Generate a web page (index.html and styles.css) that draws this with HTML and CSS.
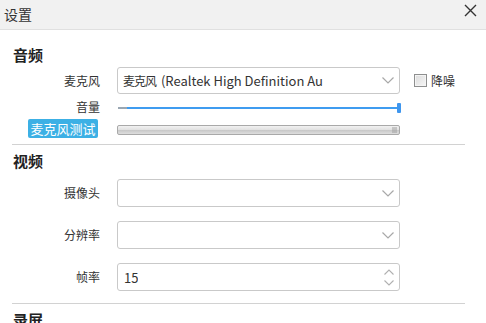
FILE: index.html
```html
<!DOCTYPE html>
<html lang="zh-CN">
<head>
<meta charset="utf-8">
<title>设置</title>
<link rel="stylesheet" href="styles.css">
</head>
<body>
<div class="window">
  <header class="titlebar">
    <span class="title">设置</span>
    <button class="close" aria-label="关闭">
      <svg width="13" height="13" viewBox="0 0 13 13"><path d="M1 1 L12 12 M12 1 L1 12" stroke="#333" stroke-width="1.4" fill="none"/></svg>
    </button>
  </header>
  <main class="content">
    <section class="section audio">
      <h2 class="heading">音频</h2>
      <div class="row row-mic">
        <label class="label">麦克风</label>
        <div class="select">
          <span class="value"><span class="cjk-narrow">麦克风</span> (Realtek High Definition Au</span>
          <svg class="chev" width="12" height="7" viewBox="0 0 12 7"><path d="M0.5 0.5 L6 6 L11.5 0.5" stroke="#a8a8a8" stroke-width="1.2" fill="none"/></svg>
        </div>
        <label class="check"><span class="box"></span>降噪</label>
      </div>
      <div class="row row-vol">
        <label class="label">音量</label>
        <div class="slider">
          <span class="track-start"></span>
          <span class="track-fill"></span>
          <span class="thumb"></span>
        </div>
      </div>
      <div class="row row-test">
        <div class="label"><button class="test-btn">麦克风测试</button></div>
        <div class="progress"><span class="grip"></span></div>
      </div>
    </section>
    <section class="section video">
      <h2 class="heading">视频</h2>
      <div class="row row-field">
        <label class="label">摄像头</label>
        <div class="select">
          <span class="value"></span>
          <svg class="chev" width="12" height="7" viewBox="0 0 12 7"><path d="M0.5 0.5 L6 6 L11.5 0.5" stroke="#a8a8a8" stroke-width="1.2" fill="none"/></svg>
        </div>
      </div>
      <div class="row row-field">
        <label class="label">分辨率</label>
        <div class="select">
          <span class="value"></span>
          <svg class="chev" width="12" height="7" viewBox="0 0 12 7"><path d="M0.5 0.5 L6 6 L11.5 0.5" stroke="#a8a8a8" stroke-width="1.2" fill="none"/></svg>
        </div>
      </div>
      <div class="row row-field">
        <label class="label">帧率</label>
        <div class="select spin">
          <span class="value">15</span>
          <span class="spin-arrows">
            <svg width="10" height="6" viewBox="0 0 10 6"><path d="M0.5 5.5 L5 1 L9.5 5.5" stroke="#b0b0b0" stroke-width="1.1" fill="none"/></svg>
            <svg width="10" height="6" viewBox="0 0 10 6"><path d="M0.5 0.5 L5 5 L9.5 0.5" stroke="#b0b0b0" stroke-width="1.1" fill="none"/></svg>
          </span>
        </div>
      </div>
    </section>
    <section class="section record">
      <h2 class="heading">录屏</h2>
    </section>
  </main>
</div>
</body>
</html>
```
FILE: styles.css
```css
* { box-sizing: border-box; }
html, body { margin: 0; padding: 0; background: #fff; }
body {
  font-family: "Noto Sans CJK SC", "Noto Sans", sans-serif;
  font-size: 13px;
  color: #333;
  overflow: hidden;
  height: 323px;
}
.titlebar {
  height: 30px;
  background: #f1f1f1;
  border-bottom: 1px solid #e0e0e0;
  display: flex;
  align-items: center;
  justify-content: space-between;
  padding: 0 9px 2px 4px;
}
.title { font-size: 14px; color: #333; line-height: 20px; }
.close {
  border: 0; background: none; padding: 0; margin: 0;
  display: flex; align-items: center; margin-top: -6px;
}
.content { padding: 0 21px 0 12px; }
.section { border-top: 1px solid #d2d2d2; }
.section.audio { border-top: 0; padding-top: 15px; padding-bottom: 6px; }
.section.video { padding-top: 6px; padding-bottom: 12px; }
.section.record { padding-top: 6px; }
.heading {
  margin: 0;
  font-size: 15px;
  font-weight: bold;
  line-height: 20px;
  padding-left: 1px;
  color: #222;
}
.row {
  display: grid;
  grid-template-columns: 88px 283px auto;
  column-gap: 17px;
  align-items: center;
}
.label { text-align: right; font-size: 12px; color: #333; line-height: 18px; }
.audio .heading { margin-bottom: 2px; }
.row-mic { height: 27px; }
.row-vol { height: 22px; margin-top: 2px; }
.row-test { height: 19px; margin-top: 1px; }
.video .heading { margin-bottom: 8px; }
.row-field { height: 28px; margin-bottom: 14px; }
.row-field:last-child { margin-bottom: 0; }

.select {
  height: 100%;
  border: 1px solid #c9c9c9;
  border-radius: 3px;
  background: #fff;
  display: flex;
  align-items: center;
  justify-content: space-between;
  padding: 0 5px 0 5px;
}
.select .value { font-size: 13px; color: #333; white-space: nowrap; overflow: hidden; }
.cjk-narrow { font-size: 12px; letter-spacing: -1px; margin-right: 2px; }
.chev { flex: none; }
.spin .value { padding-left: 1px; }
.spin-arrows { display: flex; flex-direction: column; gap: 5px; }
.spin-arrows svg { display: block; }

.check {
  display: flex; align-items: center; gap: 4px;
  font-size: 12px; color: #333; margin-left: -3px;
}
.box {
  width: 13px; height: 13px;
  border: 1px solid #8e8f8f;
  background: linear-gradient(135deg, #dcdcdc, #f6f6f6);
  box-shadow: inset 0 0 0 1px #f4f4f4;
}

.slider { position: relative; height: 11px; align-self: start; margin-top: 7px; }
.track-start {
  position: absolute; left: 1px; top: 4px; width: 9px; height: 2px; background: #9aa7b3;
}
.track-fill {
  position: absolute; left: 10px; right: 2px; top: 4px; height: 2px; background: #3f9cf0;
}
.thumb {
  position: absolute; right: -1px; top: 0; width: 4px; height: 10px;
  background: #3f96ee; border-radius: 1px;
}

.test-btn {
  border: 0;
  border-radius: 2px;
  background: #3cb0e5;
  color: #fff;
  font-family: inherit;
  font-size: 13px;
  line-height: 19px;
  height: 19px;
  width: 70px;
  padding: 0;
  display: block;
  margin-left: auto;
  margin-right: 2px;
}
.progress {
  position: relative;
  align-self: start;
  margin-top: 6px;
  height: 10px;
  border: 1px solid #a9a9a9;
  border-radius: 2px;
  background: linear-gradient(#f2f2f2 0%, #e2e2e2 45%, #c9c9c9 55%, #dedede 100%);
}
.grip {
  position: absolute; right: 2px; top: 1px; width: 5px; height: 6px;
  background-image: radial-gradient(circle, #9c9c9c 0.6px, transparent 0.8px);
  background-size: 2px 2px;
}
```
